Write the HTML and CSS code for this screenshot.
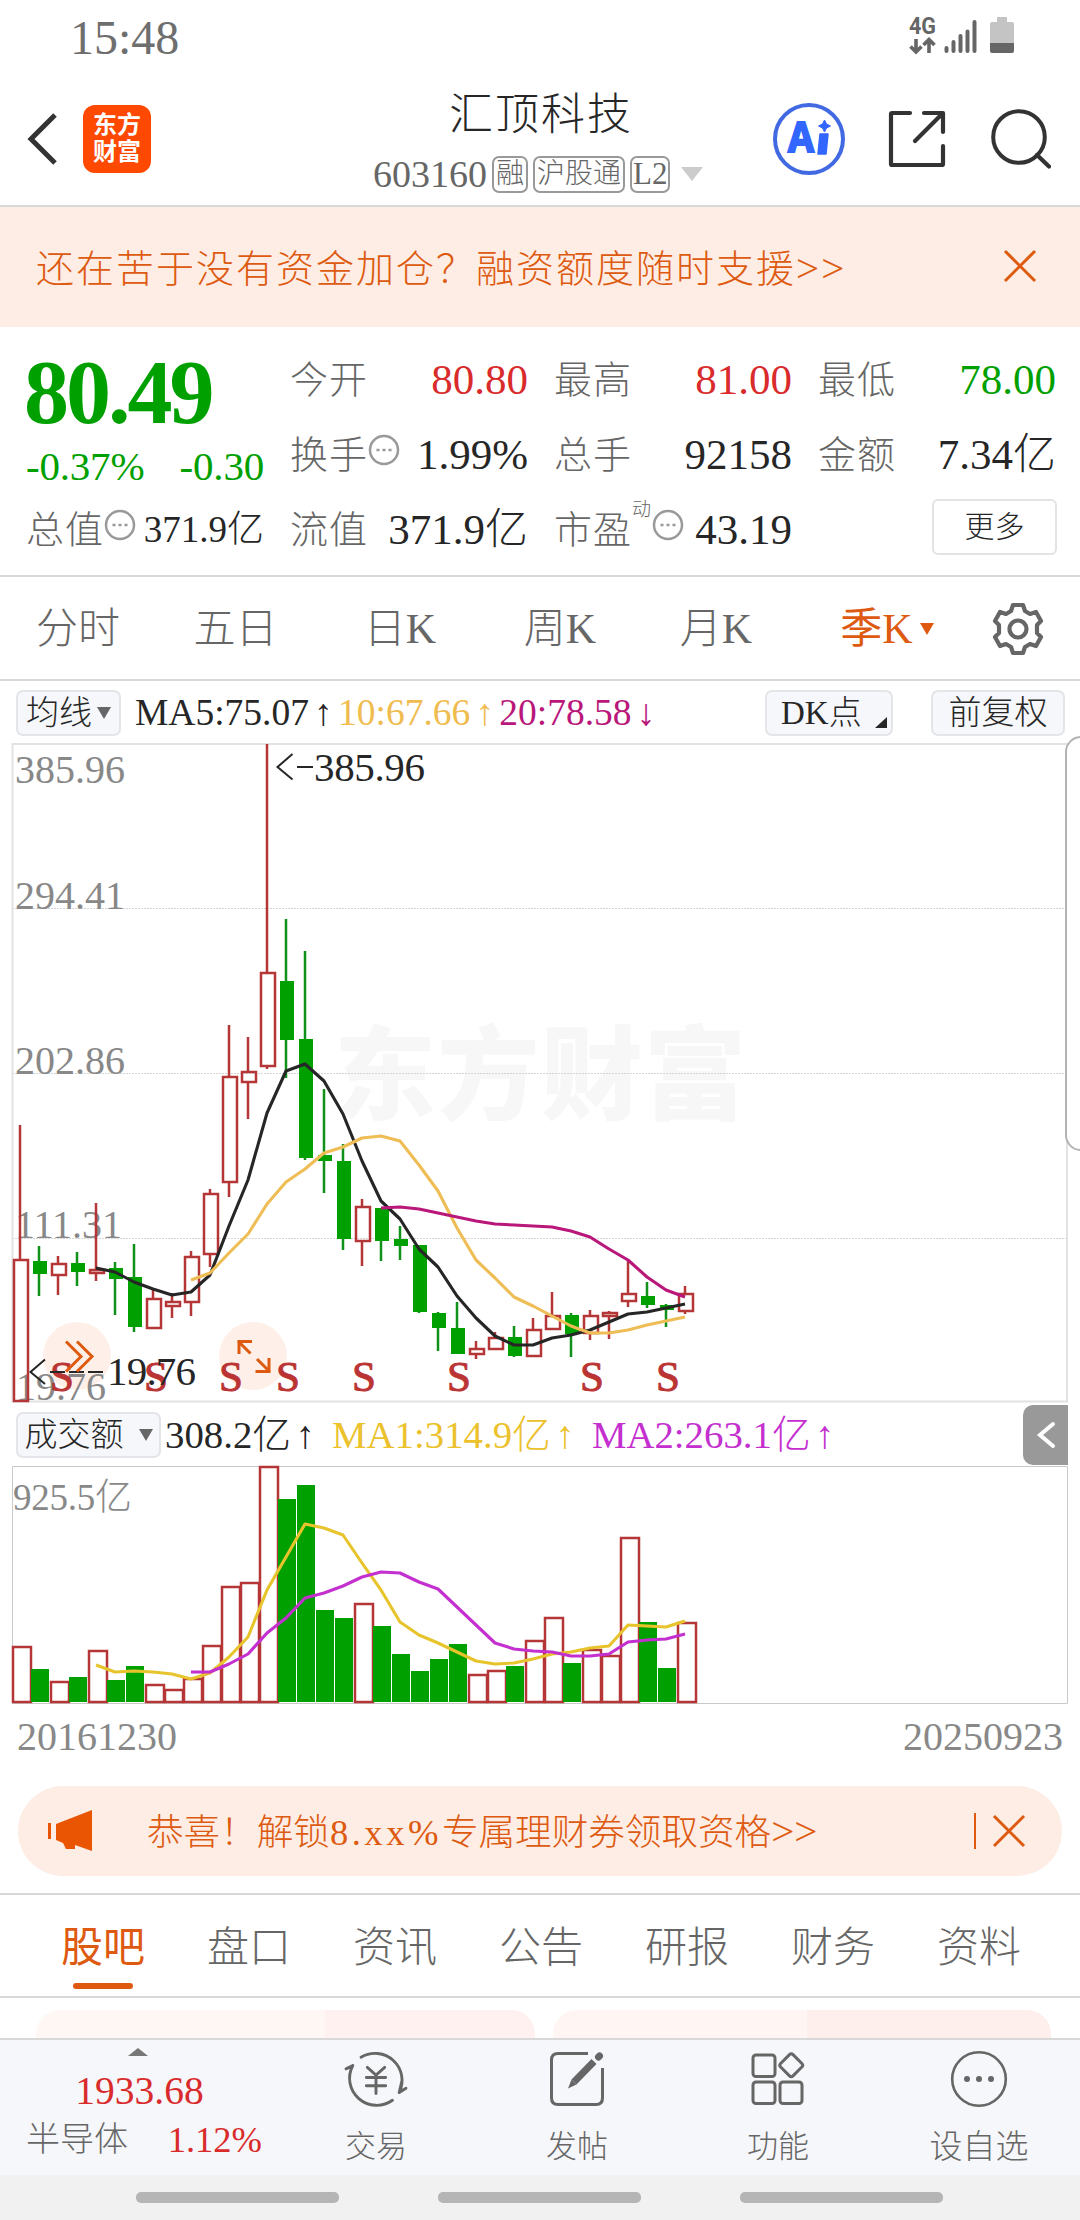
FILE: index.html
```html
<!DOCTYPE html>
<html lang="zh-CN">
<head>
<meta charset="utf-8">
<title>汇顶科技 603160</title>
<link rel="stylesheet" href="styles.css">
</head>
<body>
<div class="status">
  <span class="clock">15:48</span>
  <svg class="signal" width="108" height="40" viewBox="0 0 108 40">
    <text class="net" x="0" y="17" textLength="27" lengthAdjust="spacingAndGlyphs">4G</text>
    <path d="M7 22v12M1.500 29.500l5.500 5.500 5.500-5.500M20 36v-13M14.500 28l5.500-5.500 5.500 5.500" fill="none" stroke="#666" stroke-width="3.600"/>
    <path d="M37.500 31v3M44.500 25v9M51.500 19v15M58.500 14.500v19.500M65.500 5v29" stroke="#666" stroke-width="4" stroke-linecap="round"/>
    <path d="M88 0h10v5h5q2 0 2 2v19H81V7q0-2 2-2h5z" fill="#c4c4c4"/>
    <path d="M81 26h24v8q0 2-2 2H83q-2 0-2-2z" fill="#666"/>
  </svg>
</div>

<header class="header">
  <div class="head-left">
    <svg width="34" height="56" viewBox="0 0 34 56"><path d="M29 4L5 28l24 24" fill="none" stroke="#333" stroke-width="5"/></svg>
    <div class="logo"><span>东方</span><span>财富</span></div>
  </div>
  <div class="head-mid">
    <div class="name">汇顶科技</div>
    <div class="code"><span class="num">603160</span><span class="tag">融</span><span class="tag">沪股通</span><span class="tag latin">L2</span><i class="caret"></i></div>
  </div>
  <div class="head-right">
    <svg width="72" height="72" viewBox="0 0 72 72">
      <circle cx="36" cy="36" r="34" fill="none" stroke="#4169e1" stroke-width="4"/>
      <text class="ai" x="15" y="48.500" textLength="26" lengthAdjust="spacingAndGlyphs">A</text>
      <path d="M47 31h8l-2 20h-8z" fill="#3366ff" stroke="#3366ff" stroke-width="1.500" stroke-linejoin="round"/>
      <path d="M51.500 17l2 4 4 2-4 2-2 4-2-4-4-2 4-2z" fill="#3366ff" stroke="#3366ff"/>
    </svg>
    <svg width="58" height="58" viewBox="0 0 58 58"><path d="M22 3H4q-1 0-1 1V54q0 1 1 1H54q1 0 1-1V36M36 3H55V22M54 4L27 31" fill="none" stroke="#333" stroke-width="4.200" stroke-linecap="round" stroke-linejoin="round"/></svg>
    <svg width="60" height="60" viewBox="0 0 60 60"><circle cx="28" cy="28" r="25.800" fill="none" stroke="#333" stroke-width="4"/><path d="M46 46l12 11.500" stroke="#333" stroke-width="4.200" stroke-linecap="round"/></svg>
  </div>
</header>

<div class="banner">
  <span>还在苦于没有资金加仓<span class="mid">？</span>融资额度随时支援<span class="gt">&gt;&gt;</span></span>
  <svg width="34" height="34" viewBox="0 0 34 34"><path d="M2 2l30 30M32 2L2 32" stroke="#dd5a10" stroke-width="3"/></svg>
</div>

<section class="quote">
  <div class="price">
    <b>80.49</b>
    <div class="change"><span>-0.37%</span><span>-0.30</span></div>
  </div>
  <div class="cell"><label>今开</label><span class="up">80.80</span></div>
  <div class="cell"><label>最高</label><span class="up">81.00</span></div>
  <div class="cell"><label>最低</label><span class="down">78.00</span></div>
  <div class="cell"><label>换手<svg class="dots" viewBox="0 0 32 32"><circle cx="16" cy="16" r="14"/><path d="M8.500 16h3M14.500 16h3M20.500 16h3"/></svg></label><span>1.99%</span></div>
  <div class="cell"><label>总手</label><span>92158</span></div>
  <div class="cell"><label>金额</label><span>7.34亿</span></div>
  <div class="cell small"><label>总值<svg class="dots" viewBox="0 0 32 32"><circle cx="16" cy="16" r="14"/><path d="M8.500 16h3M14.500 16h3M20.500 16h3"/></svg></label><span>371.9亿</span></div>
  <div class="cell"><label>流值</label><span>371.9亿</span></div>
  <div class="cell"><label>市盈<sup>动</sup><svg class="dots" viewBox="0 0 32 32"><circle cx="16" cy="16" r="14"/><path d="M8.500 16h3M14.500 16h3M20.500 16h3"/></svg></label><span>43.19</span></div>
  <div class="cell end"><button class="more">更多</button></div>
</section>

<nav class="periods">
  <span>分时</span><span>五日</span><span>日K</span><span>周K</span><span>月K</span>
  <span class="on">季K<i class="caret"></i></span>
  <svg width="54" height="54" viewBox="-27 -27 54 54" fill="none" stroke="#666" stroke-width="4.200" stroke-linejoin="round"><path d="M-5-24H5L7-18L12-15L18-17L23-8L19-4V4L23 8L18 17L12 15L7 18L5 24H-5L-7 18L-12 15L-18 17L-23 8L-19 4V-4L-23-8L-18-17L-12-15L-7-18Z"/><circle r="8.500"/></svg>
</nav>

<div class="indicators">
  <button class="chip">均线<i class="caret"></i></button>
  <span class="c-ma5">MA5:75.07</span><span class="arr c-ma5">↑</span>
  <span class="c-ma10">10:67.66</span><span class="arr c-ma10">↑</span>
  <span class="c-ma20">20:78.58</span><span class="arr c-ma20">↓</span>
  <button class="chip dk">DK点<i class="corner"></i></button>
  <button class="chip adj">前复权</button>
</div>

<div class="kline">
  <svg width="1080" height="660" viewBox="0 743 1080 660">
    <text class="mark" x="334" y="1112" textLength="412">东方财富</text>
    <path d="M12 908.500H1067M12 1073.500H1067M12 1238.500H1067" stroke="#d4d4d4" stroke-dasharray="2 1"/>
    <path d="M12.500 744H1067V1401.500H12.500Z" fill="none" stroke="#e2e2e2" stroke-width="2"/>
    <g class="axis"><text x="15" y="783">385.96</text><text x="15" y="909">294.41</text><text x="15" y="1074">202.86</text><text x="15" y="1238">111.31</text></g>
    <circle cx="77" cy="1356" r="34" fill="#fef0e9"/><circle cx="253" cy="1356" r="34" fill="#fef0e9"/>
    <text class="axis" x="16" y="1400">19.76</text>
    <g id="candles"></g>
    <g class="sell"><text x="62" y="1391">S</text><text x="156" y="1391">S</text><text x="231" y="1391">S</text><text x="288" y="1391">S</text><text x="364" y="1391">S</text><text x="459" y="1391">S</text><text x="592" y="1391">S</text><text x="668" y="1391">S</text></g>
    <path d="M292.500 754L277.500 767l15 12.500M297 767h16M45 1359.500L30.500 1372l14.500 12M50 1372h15M69 1372h15M88 1372h15" fill="none" stroke="#262626" stroke-width="2"/>
    <g class="peak"><text x="314" y="781" textLength="111">385.96</text><text x="107" y="1385" textLength="89">19.76</text></g>
    <path d="M66 1341.500l15 15-15 15M77 1341.500l15 15-15 15M239 1354v-12.500h13M238 1341l12.500 12.500M269 1358v13.500h-13.500M270 1372l-13-13" fill="none" stroke="#dd5a10" stroke-width="3"/>
  </svg>
  <div class="drawer"></div>
</div>

<div class="indicators vol">
  <button class="chip">成交额<i class="caret"></i></button>
  <span class="c-ma5">308.2亿</span><span class="arr c-ma5">↑</span>
  <span class="c-v1">MA1:314.9亿</span><span class="arr c-v1">↑</span>
  <span class="c-v2">MA2:263.1亿</span><span class="arr c-v2">↑</span>
  <div class="fold"><svg width="20" height="30" viewBox="0 0 20 30"><path d="M17 4L4 15l13 11" fill="none" stroke="#fff" stroke-width="4" stroke-linecap="round"/></svg></div>
</div>

<div class="volume">
  <svg width="1080" height="240" viewBox="0 1465 1080 240">
    <path d="M12.500 1466.500H1067.500V1703.500H12.500Z" fill="none" stroke="#c9c9c9"/>
    <text class="axis" x="13" y="1510" textLength="119">925.5亿</text>
    <g id="bars"></g>
  </svg>
</div>
<div class="dates"><span>20161230</span><span>20250923</span></div>

<div class="notice">
  <svg width="50" height="44" viewBox="0 0 50 44"><path d="M3 14h3v16H3zM11 15L47 1v41L30 36v4h-9l-3-6-7-3z" fill="#ea5504"/></svg>
  <span class="notice-text">恭喜<span class="mid">！</span>解锁<span class="wide">8.xx%</span>专属理财券领取资格<span class="gt">&gt;&gt;</span></span>
  <i class="bar"></i>
  <svg width="34" height="34" viewBox="0 0 34 34"><path d="M2 2l30 30M32 2L2 32" stroke="#dd5a10" stroke-width="3"/></svg>
</div>

<nav class="tabs"><span class="on">股吧</span><span>盘口</span><span>资讯</span><span>公告</span><span>研报</span><span>财务</span><span>资料</span></nav>
<div class="cards"><div class="card"></div><div class="card"></div></div>

<footer class="bottom">
  <div class="index">
    <i class="caret"></i>
    <span class="idx">1933.68</span>
    <div class="sector"><span>半导体</span><span class="up">1.12%</span></div>
  </div>
  <div class="act">
    <svg width="68" height="60" viewBox="-34 -30 68 60" fill="none" stroke="#666" stroke-width="3" stroke-linecap="round"><path d="M-15.500-22.500A28 28 0 0 1 24 14M24 14l7-4.500M24 14l3-13M17 22A28 28 0 0 1-24-14M-24-14l-7 3.500M-9-12L0-4L9-12M-10-1.500H10M-10 7H10M0-4V15"/></svg>
    <span>交易</span>
  </div>
  <div class="act">
    <svg width="56" height="56" viewBox="0 0 56 56" fill="none" stroke="#666" stroke-width="3"><path d="M39 2.500H9Q2.500 2.500 2.500 9V47Q2.500 53.500 9 53.500H47Q53.500 53.500 53.500 47V17"/><path d="M45 10.500L25 31" stroke-width="7"/><path d="M22.500 28.500l5 5-8.500 4z" fill="#666" stroke="none"/><path d="M49.500 6l1-1" stroke-width="7" stroke-linecap="round"/></svg>
    <span>发帖</span>
  </div>
  <div class="act">
    <svg width="54" height="54" viewBox="0 0 54 54" fill="none" stroke="#666" stroke-width="3"><rect x="2" y="3" width="22" height="21.500" rx="3"/><rect x="2" y="30" width="22" height="21.500" rx="3"/><rect x="29" y="30" width="22" height="21.500" rx="3"/><rect x="31.500" y="4.500" width="17.500" height="17.500" rx="2.500" transform="rotate(45 40.250 13.250)"/></svg>
    <span>功能</span>
  </div>
  <div class="act">
    <svg width="58" height="58" viewBox="-29 -29 58 58"><circle r="26.800" fill="none" stroke="#666" stroke-width="2.600"/><circle cx="-12" r="3" fill="#666"/><circle r="3" fill="#666"/><circle cx="12" r="3" fill="#666"/></svg>
    <span class="w3">设自选</span>
  </div>
</footer>
<div class="sysnav"><i></i><i></i><i></i></div>
<script src="chart.js"></script>
</body>
</html>
```
FILE: styles.css
```css
* { box-sizing: border-box; }
body { margin: 0; width: 1080px; height: 2220px; overflow: hidden; background: #fff; color: #262626; font-family: "Liberation Serif", "Noto Sans CJK SC", serif; font-weight: 300; }
svg { display: block; flex: none; }
button { font: inherit; color: inherit; padding: 0; margin: 0; }
i { display: block; flex: none; }
.up { color: #d92b2b; }
.down { color: #00a000; }
.caret { width: 0; height: 0; border: 7px solid transparent; border-bottom: 0; border-top: 12px solid #666; }
.mid { font-family: "Noto Sans CJK TC", sans-serif; }
.gt { font-size: 41px; }

.status { height: 70px; display: flex; justify-content: space-between; padding: 17px 63px 0 70px; }
.signal { overflow: visible; }
.clock { font-size: 48px; line-height: 42px; color: #6e6e6e; }
.net { font: bold 23px "Roboto", sans-serif; fill: #666; }

.header { height: 137px; border-bottom: 2px solid #d8d8d8; display: grid; grid-template-columns: 373px 1fr 308px; }
.head-left { display: flex; align-items: center; padding: 0 0 0 26px; height: 138px; gap: 23px; }
.logo { width: 68px; height: 68px; border-radius: 12px; background: #ff4800; color: #fff; display: flex; flex-direction: column; align-items: center; justify-content: center; font-size: 24px; line-height: 27px; font-weight: 700; }
.head-mid { padding-top: 18px; }
.name { font-size: 44px; letter-spacing: 2px; line-height: 56px; padding-left: 76px; }
.code { display: flex; align-items: center; height: 38px; margin-top: 11px; color: #666; gap: 5px; }
.num { font-size: 38px; line-height: 38px; }
.tag { height: 37px; border: 2px solid #999; border-radius: 7px; font-size: 28px; line-height: 32px; padding: 0 2px; }
.tag.latin { font-size: 31px; padding: 0 1px; }
.code .caret { border-width: 14px 11px 0; border-top-color: #ccc; margin-left: 6px; }
.head-right { display: flex; height: 138px; align-items: center; gap: 40px; padding-left: 1px; }
.head-right svg:nth-child(2) { margin-left: 3px; }
.head-right svg:nth-child(3) { margin-left: 5px; }
.ai { font: bold 41px "Open Sans", sans-serif; fill: #36f; stroke: #36f; stroke-width: 2; }

.banner { height: 120px; background: #fdede4; color: #dd5a10; display: flex; align-items: center; justify-content: space-between; padding: 0 43px 0 36px; font-size: 38px; letter-spacing: 2px; line-height: 60px; }
.banner > svg { margin-bottom: 3px; }

.quote { height: 250px; border-bottom: 2px solid #d8d8d8; padding: 15px 24px 0 26px; display: grid; grid-template-columns: repeat(4, 238px); grid-template-rows: repeat(3, 75px); column-gap: 26px; }
.price { grid-row: span 2; color: #00a000; display: flex; flex-direction: column; }
.price b { font-size: 90px; font-weight: 700; letter-spacing: -3px; line-height: 102px; margin-left: -2px; }
.change { display: flex; justify-content: space-between; font-size: 41px; line-height: 44px; letter-spacing: -0.200px; }
.cell { display: flex; justify-content: space-between; align-items: center; font-size: 43px; line-height: 60px; white-space: nowrap; }
.cell label { font-size: 38px; color: #666; display: flex; align-items: center; letter-spacing: 1px; }
.cell.small > span { font-size: 37px; }
.cell.end { justify-content: flex-end; }
.dots { width: 32px; height: 32px; margin-bottom: 9px; fill: none; stroke: #999; stroke-width: 2.500; }
sup { font-size: 19px; line-height: 20px; align-self: flex-start; width: 20px; }
.more { width: 125px; height: 56px; background: #fff; border: 2px solid #e3e3e3; border-radius: 6px; font-size: 30px; line-height: 50px; position: relative; left: 1px; top: -3px; }

.periods { height: 104px; border-bottom: 2px solid #d8d8d8; display: grid; grid-template-columns: 156px 159px 170px 150px 162px 160px 1fr; color: #666; font-size: 42px; line-height: 104px; align-items: center; }
.periods span { display: flex; align-items: center; justify-content: center; }
.periods .on { color: #dd5a10; gap: 7px; padding-left: 20px; font-weight: 400; }
.periods .caret { border-top-color: #dd5a10; }
.periods svg { margin-left: 34px; }

.indicators { height: 62px; position: relative; display: flex; align-items: center; padding: 2px 15px 0 16px; font-size: 37.500px; line-height: 46px; white-space: nowrap; }
.chip { height: 46px; width: 105px; background: #f6f7fa; border: 2px solid #e3e5e8; border-radius: 7px; font-size: 33px; line-height: 40px; display: flex; align-items: center; justify-content: center; gap: 5px; margin-right: 14px; }
.dk { width: 128px; margin: 0 38px 0 auto; justify-content: flex-start; padding-left: 14px; gap: 13px; }
.adj { width: 134px; margin: 0; }
.corner { width: 0; height: 0; border-left: 12px solid transparent; border-bottom: 11px solid #262626; margin-top: 18px; }
.arr { width: 29px; text-align: center; }
.c-ma5 { color: #262626; } .c-ma10 { color: #f0bc50; } .c-ma20 { color: #b9177a; }
.c-v1 { color: #ebc12c; } .c-v2 { color: #c42fcf; }

.kline { height: 660px; position: relative; }
.drawer { position: absolute; left: 1065px; top: -7px; width: 40px; height: 415px; border: 2px solid #b3b3b3; border-radius: 16px; background: #fff; }
.mark { font: 900 102px "Noto Sans CJK SC", sans-serif; fill: #f7f7f7; }
.axis { font-size: 41px; fill: #888; }
.kline .axis { font-size: 40px; }
.volume .axis { font-size: 37px; }
.sell { font-size: 43px; font-weight: 400; fill: #bb3434; stroke: #bb3434; stroke-width: 1; text-anchor: middle; }
.peak { font-size: 41px; fill: #262626; }

.vol { padding: 2px 12px 0 16px; font-size: 38.800px; }
.vol .chip { width: 145px; gap: 15px; margin-right: 4px; }
.vol .arr { width: 41px; padding-right: 13px; }
.fold { margin-left: auto; width: 45px; height: 60px; background: #999; border-radius: 10px 0 0 10px; display: flex; align-items: center; justify-content: center; }

.volume { height: 240px; }
.dates { height: 81px; display: flex; justify-content: space-between; padding: 7px 17px 0; font-size: 40px; line-height: 50px; color: #888; }
.notice { margin: 0 18px; height: 90px; border-radius: 45px; background: #fdede4; color: #dd5a10; display: flex; align-items: center; padding-left: 27px; font-size: 36.600px; line-height: 50px; }
.notice-text { margin-left: 52px; width: 827px; white-space: nowrap; }
.wide { letter-spacing: 3.500px; }
.bar { width: 2px; height: 36px; background: #dd5a10; margin-right: 16px; }

.tabs { margin-top: 17px; height: 105px; border-top: 2px solid #d8d8d8; border-bottom: 2px solid #d8d8d8; padding: 0 28px 0 30px; display: grid; grid-template-columns: repeat(7, 1fr); font-size: 42px; line-height: 106px; color: #666; text-align: center; }
.tabs .on { color: #dd5a10; font-weight: 400; position: relative; }
.tabs .on::after { content: ""; position: absolute; left: 43px; top: 88px; width: 60px; height: 6px; border-radius: 3px; background: #dd5a10; }
.cards { height: 40px; overflow: hidden; padding: 12px 29px 0 36px; display: grid; grid-template-columns: 499px 498px; gap: 18px; }
.card { height: 60px; border-radius: 24px; background: linear-gradient(90deg, #fff7f4 0 58%, #fef1ef 58%); }
.card + .card { background: linear-gradient(90deg, #fff6f4 0 51%, #feefed 51%); }

.bottom { height: 137px; border-top: 2px solid #d8d8d8; background: #f6f7fa; color: #666; display: grid; grid-template-columns: 275px repeat(4, 201px); }
.index { display: flex; flex-direction: column; align-items: center; padding-top: 8px; }
.index .caret { border: 10px solid transparent; border-top: 0; border-bottom: 8px solid #777; }
.idx { font-size: 39.500px; line-height: 48px; margin-top: 11px; padding-left: 4px; color: #d92b2b; }
.sector { align-self: stretch; display: flex; justify-content: space-between; font-size: 34px; line-height: 50px; padding: 0 13px 0 26px; }
.sector .up { font-size: 36.500px; }
.act { display: flex; flex-direction: column; align-items: center; font-size: 31px; padding-left: 1px; }
.act svg { margin-top: 10px; height: 58px; }
.act span { line-height: 46px; margin-top: 16px; }
.act .w3 { font-size: 33px; }
.sysnav { height: 45px; background: #f1f1f1; display: flex; gap: 99px; padding: 17px 0 0 136px; }
.sysnav i { width: 203px; height: 11px; border-radius: 5px; background: #b5b5b5; }
```
FILE: chart.js
```
// Each candle: colour, high, body top, body bottom, low (chart y units).
const candles = [
  ['r',1125,1259,1402,1402],['g',1246,1261,1274,1296],['r',1256,1263,1276,1295],['g',1252,1263,1272,1286],
  ['r',1203,1269,1274,1281],['g',1262,1268,1279,1315],['g',1244,1277,1327,1332],['r',1290,1298,1329,1329],
  ['r',1293,1301,1307,1318],['r',1251,1256,1303,1316],['r',1189,1193,1255,1267],['r',1025,1076,1183,1197],
  ['r',1037,1071,1083,1119],['r',744,972,1067,1069],['g',919,981,1040,1078],['g',951,1039,1158,1160],
  ['g',1089,1155,1161,1193],['g',1144,1161,1239,1250],['r',1199,1206,1242,1266],['g',1208,1208,1241,1261],
  ['g',1226,1239,1246,1260],['g',1245,1245,1312,1313],['g',1312,1313,1328,1351],['g',1302,1328,1354,1354],
  ['r',1341,1348,1355,1359],['r',1332,1337,1350,1350],['g',1326,1337,1356,1357],['r',1318,1329,1357,1357],
  ['r',1292,1315,1330,1330],['g',1313,1315,1334,1357],['r',1310,1315,1334,1340],['r',1311,1312,1317,1339],
  ['r',1260,1293,1302,1307],['g',1282,1296,1305,1308],['g',1304,1305,1310,1327],['r',1286,1293,1312,1314]
];
const tops = [1646,1669,1681,1677,1650,1680,1666,1684,1689,1678,1645,1586,1582,1466,1499,1485,1610,1618,1603,1626,1654,1671,1659,1644,1674,1670,1666,1640,1617,1663,1649,1655,1537,1622,1668,1622];
const RED = '#b53636', GREEN = '#00a000', STEP = 19, X0 = 20;

function line(start, ys, color) {
  const pts = ys.map((y, i) => (X0 + STEP * (start + i)) + ',' + y).join(' ');
  return `<polyline points="${pts}" fill="none" stroke="${color}" stroke-width="3.100" stroke-linejoin="round"/>`;
}
function body(color, x, y, w, h) {
  return color === 'r'
    ? `<rect x="${x + 1}" y="${y + 1}" width="${w}" height="${h - 2}" fill="none" stroke="${RED}" stroke-width="2.500"/>`
    : `<rect x="${x + 1}" y="${y}" width="${w}" height="${h}" fill="${GREEN}"/>`;
}

let k = '';
candles.forEach(([c, hi, top, bot, lo], i) => {
  const x = X0 + STEP * i, color = c === 'r' ? RED : '#12911a';
  k += `<path d="M${x} ${hi}V${top}M${x} ${bot}V${lo}" stroke="${color}" stroke-width="2.500"/>` + body(c, x - 7, top, 14, bot - top);
});
k += line(4, [1268,1272,1282,1289,1295,1292,1275,1226,1180,1113,1071,1064,1081,1114,1161,1201,1219,1249,1267,1296,1318,1336,1345,1345,1338,1335,1330,1322,1314,1312,1308,1304], '#262626');
k += line(9, [1280,1273,1253,1234,1204,1182,1169,1153,1147,1138,1136,1141,1165,1191,1228,1260,1278,1297,1306,1316,1326,1333,1333,1330,1325,1321,1317], '#efbd55');
k += line(19, [1208,1207,1209,1213,1217,1221,1224,1225,1226,1227,1231,1237,1249,1260,1277,1290,1297], '#b9177a');
document.getElementById('candles').innerHTML = k;

let v = '';
tops.forEach((y, i) => {
  const c = candles[i][0], x = 12 + STEP * i;
  v += c === 'r' ? body('r', x, y, 18, 1703 - y) : body('g', x - 1, y, 18, 1702 - y);
});
v += line(4, [1665,1672,1671,1672,1674,1679,1673,1657,1637,1590,1557,1524,1528,1535,1563,1590,1622,1635,1643,1652,1661,1664,1663,1659,1654,1652,1648,1646,1625,1626,1627,1621], '#e8c42c');
v += line(9, [1672,1672,1664,1654,1633,1618,1598,1593,1586,1577,1572,1573,1582,1589,1607,1625,1643,1649,1651,1652,1656,1656,1654,1642,1640,1639,1634], '#c42fcf');
document.getElementById('bars').innerHTML = v;
```
